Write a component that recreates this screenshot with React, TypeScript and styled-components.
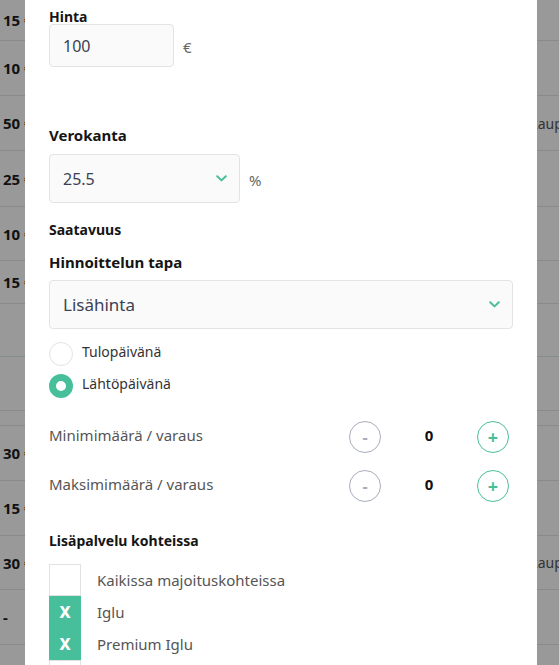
import styled, { createGlobalStyle } from "styled-components";

const GREEN = "#48bf9b";

const GlobalStyle = createGlobalStyle`
  html, body {
    margin: 0;
    padding: 0;
    height: 100%;
    overflow: hidden;
    background: #fff;
    font-family: "Noto Sans", "Open Sans", sans-serif;
  }
`;

type Row = { h: number; price?: string; side?: string; accent?: boolean };

const rows: Row[] = [
  { h: 41, price: "15 €" },
  { h: 55, price: "10 €" },
  { h: 55, price: "50 €", side: "Verkkokaupassa" },
  { h: 56, price: "25 €" },
  { h: 54, price: "10 €" },
  { h: 43, price: "15 €" },
  { h: 53, accent: true },
  { h: 54 },
  { h: 15 },
  { h: 55, price: "30 €" },
  { h: 55, price: "15 €" },
  { h: 54, price: "30 €", side: "Verkkokaupassa" },
  { h: 55, price: "-" },
  { h: 55 },
];

const checks = [
  { label: "Kaikissa majoituskohteissa", on: false },
  { label: "Iglu", on: true },
  { label: "Premium Iglu", on: true },
  { label: "Lasi-iglu", on: false },
];

const Chevron = () => (
  <svg width="11" height="7" viewBox="0 0 11 7" fill="none">
    <path d="M1.2 1.2 L5.5 5.4 L9.8 1.2" stroke={GREEN} strokeWidth="2" strokeLinecap="round" strokeLinejoin="round" />
  </svg>
);

export default function App() {
  return (
    <>
      <GlobalStyle />
      <Table>
        {rows.map((r, i) => (
          <TableRow key={i} $h={r.h} $accent={r.accent}>
            <PriceCell>{r.price}</PriceCell>
            <SideCell>{r.side}</SideCell>
          </TableRow>
        ))}
      </Table>
      <Overlay />
      <Modal>
        <Label $size={14}>Hinta</Label>
        <FieldRow $top={-2}>
          <TextInput>100</TextInput>
          <Unit>€</Unit>
        </FieldRow>

        <Label $size={15} $top={59}>Verokanta</Label>
        <FieldRow $top={10}>
          <Select $width={191}>
            <SelectValue $size={16}>25.5</SelectValue>
            <Chevron />
          </Select>
          <Unit>%</Unit>
        </FieldRow>

        <Label $size={14} $top={18}>Saatavuus</Label>
        <Label $size={15} $top={14}>Hinnoittelun tapa</Label>
        <FieldRow $top={9}>
          <Select>
            <SelectValue $size={17}>Lisähinta</SelectValue>
            <Chevron />
          </Select>
        </FieldRow>

        <RadioList>
          <RadioRow>
            <Radio />
            <RadioLabel>Tulopäivänä</RadioLabel>
          </RadioRow>
          <RadioRow>
            <Radio $checked />
            <RadioLabel>Lähtöpäivänä</RadioLabel>
          </RadioRow>
        </RadioList>

        <Counters>
          <CounterRow>
            <CounterLabel>Minimimäärä / varaus</CounterLabel>
            <Stepper>
              <RoundButton>-</RoundButton>
              <Count>0</Count>
              <RoundButton $plus>+</RoundButton>
            </Stepper>
          </CounterRow>
          <CounterRow>
            <CounterLabel>Maksimimäärä / varaus</CounterLabel>
            <Stepper>
              <RoundButton>-</RoundButton>
              <Count>0</Count>
              <RoundButton $plus>+</RoundButton>
            </Stepper>
          </CounterRow>
        </Counters>

        <Label $size={14} $top={30}>Lisäpalvelu kohteissa</Label>
        <CheckList>
          {checks.map((c) => (
            <CheckRow key={c.label}>
              <CheckBox $on={c.on}>{c.on ? "X" : ""}</CheckBox>
              <CheckLabel>{c.label}</CheckLabel>
            </CheckRow>
          ))}
        </CheckList>
      </Modal>
    </>
  );
}

const Table = styled.div`
  width: 100%;
`;

const TableRow = styled.div<{ $h: number; $accent?: boolean }>`
  height: ${(p) => p.$h}px;
  display: flex;
  align-items: center;
  justify-content: space-between;
  border-bottom: 1px solid ${(p) => (p.$accent ? "#d6efe7" : "#e6e6e6")};
  box-sizing: border-box;
`;

const PriceCell = styled.div`
  padding-left: 3px;
  font-size: 15px;
  font-weight: 700;
  color: #1d1d1d;
`;

const SideCell = styled.div`
  margin-right: -33px;
  font-size: 14px;
  color: #555;
`;

const Overlay = styled.div`
  position: fixed;
  inset: 0;
  background: rgba(0, 0, 0, 0.4);
`;

const Modal = styled.div`
  position: fixed;
  top: 0;
  bottom: 0;
  left: 25px;
  width: 512px;
  box-sizing: border-box;
  padding: 8px 24px 0 24px;
  background: #fff;
  overflow: hidden;
  display: flex;
  flex-direction: column;
`;

const Label = styled.div<{ $size: number; $top?: number }>`
  margin-top: ${(p) => p.$top ?? 0}px;
  font-size: ${(p) => p.$size}px;
  line-height: 18px;
  font-weight: 700;
  color: #151515;
`;

const FieldRow = styled.div<{ $top?: number }>`
  margin-top: ${(p) => p.$top ?? 0}px;
  display: flex;
  align-items: center;
  gap: 9px;
`;

const TextInput = styled.div`
  width: 125px;
  height: 43px;
  box-sizing: border-box;
  padding: 0 13px;
  display: flex;
  align-items: center;
  background: #fafafa;
  border: 1px solid #e3e3e3;
  border-radius: 4px;
  font-size: 16px;
  color: #3b4152;
`;

const Unit = styled.span`
  font-size: 15px;
  color: #666;
  padding-top: 3px;
`;

const Select = styled.div<{ $width?: number }>`
  width: ${(p) => (p.$width ? `${p.$width}px` : "100%")};
  height: 49px;
  box-sizing: border-box;
  padding: 0 12px 0 13px;
  display: flex;
  align-items: center;
  justify-content: space-between;
  background: #fafafa;
  border: 1px solid #e3e3e3;
  border-radius: 4px;
`;

const SelectValue = styled.span<{ $size: number }>`
  font-size: ${(p) => p.$size}px;
  color: #3b4152;
`;

const RadioList = styled.div`
  margin-top: 13px;
  display: flex;
  flex-direction: column;
  gap: 8px;
`;

const RadioRow = styled.div`
  display: flex;
  align-items: flex-start;
  gap: 9px;
`;

const Radio = styled.span<{ $checked?: boolean }>`
  width: 24px;
  height: 24px;
  box-sizing: border-box;
  border-radius: 50%;
  border: ${(p) => (p.$checked ? `7px solid ${GREEN}` : "1px solid #e2e2e2")};
  background: #fff;
`;

const RadioLabel = styled.span`
  font-size: 14px;
  line-height: 20px;
  color: #333;
`;

const Counters = styled.div`
  margin-top: 23px;
  display: flex;
  flex-direction: column;
  gap: 17px;
`;

const CounterRow = styled.div`
  display: flex;
  align-items: center;
  justify-content: space-between;
  padding-right: 4px;
`;

const CounterLabel = styled.span`
  font-size: 15px;
  color: #555;
  margin-top: -4px;
`;

const Stepper = styled.div`
  width: 160px;
  display: grid;
  grid-template-columns: 32px 1fr 32px;
  align-items: center;
`;

const RoundButton = styled.span<{ $plus?: boolean }>`
  width: 32px;
  height: 32px;
  box-sizing: border-box;
  border-radius: 50%;
  border: 1px solid ${(p) => (p.$plus ? GREEN : "#a7adbb")};
  display: flex;
  align-items: center;
  justify-content: center;
  font-size: ${(p) => (p.$plus ? 18 : 16)}px;
  font-weight: 700;
  color: ${(p) => (p.$plus ? GREEN : "#a7adbb")};
`;

const Count = styled.span`
  text-align: center;
  font-size: 15px;
  font-weight: 700;
  color: #111;
  margin-top: -5px;
`;

const CheckList = styled.div`
  margin-top: 14px;
  display: flex;
  flex-direction: column;
`;

const CheckRow = styled.div`
  display: flex;
  align-items: center;
  gap: 16px;
`;

const CheckBox = styled.span<{ $on: boolean }>`
  width: 32px;
  height: 32px;
  box-sizing: border-box;
  display: flex;
  align-items: center;
  justify-content: center;
  background: ${(p) => (p.$on ? GREEN : "#fff")};
  border: 1px solid ${(p) => (p.$on ? GREEN : "#e2e2e2")};
  color: #fff;
  font-size: 16px;
  font-weight: 800;
`;

const CheckLabel = styled.span`
  font-size: 15px;
  color: #555;
`;
